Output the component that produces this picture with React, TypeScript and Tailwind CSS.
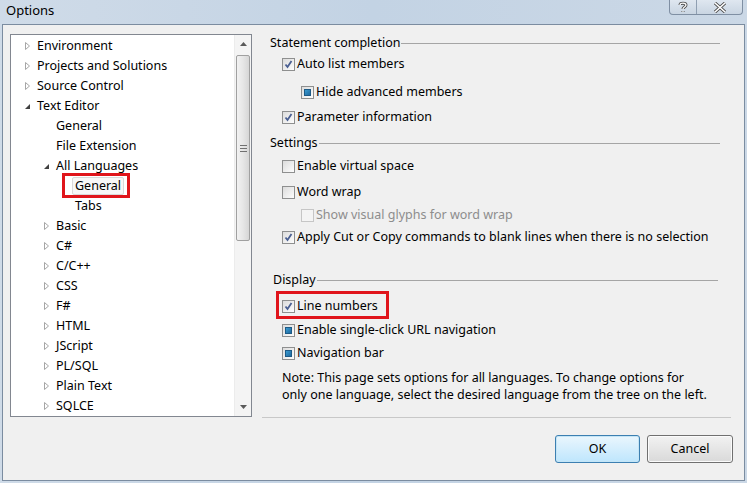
import React from 'react';

type CheckState = 'checked' | 'unchecked' | 'mixed' | 'disabled';

interface TreeItem {
  label: string;
  level: number;
  arrow?: 'closed' | 'open';
  selected?: boolean;
}

const TREE: TreeItem[] = [
  { label: 'Environment', level: 0, arrow: 'closed' },
  { label: 'Projects and Solutions', level: 0, arrow: 'closed' },
  { label: 'Source Control', level: 0, arrow: 'closed' },
  { label: 'Text Editor', level: 0, arrow: 'open' },
  { label: 'General', level: 1 },
  { label: 'File Extension', level: 1 },
  { label: 'All Languages', level: 1, arrow: 'open' },
  { label: 'General', level: 2, selected: true },
  { label: 'Tabs', level: 2 },
  { label: 'Basic', level: 1, arrow: 'closed' },
  { label: 'C#', level: 1, arrow: 'closed' },
  { label: 'C/C++', level: 1, arrow: 'closed' },
  { label: 'CSS', level: 1, arrow: 'closed' },
  { label: 'F#', level: 1, arrow: 'closed' },
  { label: 'HTML', level: 1, arrow: 'closed' },
  { label: 'JScript', level: 1, arrow: 'closed' },
  { label: 'PL/SQL', level: 1, arrow: 'closed' },
  { label: 'Plain Text', level: 1, arrow: 'closed' },
  { label: 'SQLCE', level: 1, arrow: 'closed' },
];

const INDENT = ['pl-[13px]', 'pl-[32px]', 'pl-[51px]'];

function Arrow({ kind }: { kind?: 'closed' | 'open' }) {
  if (!kind) return <span className="w-[13px] shrink-0" />;
  if (kind === 'open') {
    return (
      <svg width="13" height="10" viewBox="0 0 13 10" className="shrink-0">
        <path d="M1 8 L6 3 L6 8 Z" fill="#404040" />
      </svg>
    );
  }
  return (
    <svg width="13" height="10" viewBox="0 0 13 10" className="shrink-0">
      <path d="M1.5 1.5 L5.5 5 L1.5 8.5 Z" fill="none" stroke="#a6a6a6" strokeWidth="1" />
    </svg>
  );
}

function Checkbox({ state }: { state: CheckState }) {
  if (state === 'disabled') {
    return <span className="h-[13px] w-[13px] shrink-0 border border-[#c6c6c6] bg-[#f4f4f4]" />;
  }
  return (
    <span className="flex h-[13px] w-[13px] shrink-0 items-center justify-center border border-[#8e8f8f] bg-gradient-to-br from-[#dcdcdc] to-[#fdfdfd]">
      {state === 'checked' && (
        <svg width="9" height="9" viewBox="0 0 9 9">
          <path d="M1.5 4.5 L3.5 7 L7.5 1" fill="none" stroke="#4a5f92" strokeWidth="1.8" />
        </svg>
      )}
      {state === 'mixed' && (
        <span className="h-[7px] w-[7px] border border-[#1d5a86] bg-gradient-to-br from-[#3a9bd0] to-[#1f6aa0]" />
      )}
    </span>
  );
}

function Option({
  label,
  state,
  indent = false,
  className = '',
}: {
  label: string;
  state: CheckState;
  indent?: boolean;
  className?: string;
}) {
  return (
    <div className={`flex h-[20px] items-center gap-[2px] ${indent ? 'pl-[39px]' : 'pl-[20px]'} ${className}`}>
      <Checkbox state={state} />
      <span className={`whitespace-nowrap ${state === 'disabled' ? 'text-[#8d8d8d]' : 'text-black'}`}>{label}</span>
    </div>
  );
}

function Heading({ label, className = '' }: { label: string; className?: string }) {
  return (
    <div className={`flex h-[20px] items-center ${className}`}>
      <span className="pr-[1px]">{label}</span>
      <span className="h-px flex-1 bg-[#a5a5a5]" />
    </div>
  );
}

function Scrollbar() {
  return (
    <div className="flex w-[17px] shrink-0 flex-col border-l border-[#ececec] bg-[#f4f4f4]">
      <div className="flex h-[18px] items-center justify-center">
        <svg width="7" height="4" viewBox="0 0 7 4">
          <path d="M0 4 L3.5 0 L7 4 Z" fill="#5a5a5a" />
        </svg>
      </div>
      <div className="mx-[1px] mt-[2px] flex h-[186px] items-center justify-center rounded-[2px] border border-[#a0a0a0] bg-gradient-to-r from-[#f2f2f2] via-[#e6e6e6] to-[#d6d6d6]">
        <div className="flex flex-col gap-[2px]">
          <span className="h-px w-[7px] bg-[#707070]" />
          <span className="h-px w-[7px] bg-[#707070]" />
          <span className="h-px w-[7px] bg-[#707070]" />
        </div>
      </div>
      <div className="flex-1" />
      <div className="flex h-[18px] items-center justify-center">
        <svg width="7" height="4" viewBox="0 0 7 4">
          <path d="M0 0 L3.5 4 L7 0 Z" fill="#5a5a5a" />
        </svg>
      </div>
    </div>
  );
}

export default function App() {
  return (
    <div
      className="flex h-[483px] w-[747px] flex-col overflow-hidden bg-gradient-to-r from-[#cfdbe8] via-[#c3d3e4] to-[#cbd8e6] text-[12.5px] text-black"
      style={{ fontFamily: '"Noto Sans", "Open Sans", sans-serif' }}
    >
      {/* title bar */}
      <div className="relative flex h-[24px] shrink-0 items-start">
        <span className="pl-[6px] pt-[1px] text-[13px] text-black">Options</span>
        <div className="absolute right-[4px] top-0 flex h-[15px] overflow-hidden rounded-b-[4px] border border-t-0 border-[#7f8fa3] bg-gradient-to-b from-[#dfe7f0] to-[#c9d5e2]">
          <div className="flex w-[27px] items-center justify-center border-r border-[#8f9fb2]">
            <svg width="10" height="12" viewBox="0 0 10 12">
              <path
                d="M2 4 C2 1.5 8 1.5 8 4 C8 6 5 6 5 8 M5 10 L5 11"
                fill="none"
                stroke="#4d4d4d"
                strokeWidth="3"
              />
              <path
                d="M2 4 C2 1.5 8 1.5 8 4 C8 6 5 6 5 8 M5 10 L5 11"
                fill="none"
                stroke="#ffffff"
                strokeWidth="1.3"
              />
            </svg>
          </div>
          <div className="flex w-[45px] items-center justify-center">
            <svg width="14" height="11" viewBox="0 0 14 11">
              <path d="M2 1 L12 10 M12 1 L2 10" stroke="#4d4d4d" strokeWidth="3.2" />
              <path d="M2 1 L12 10 M12 1 L2 10" stroke="#ffffff" strokeWidth="1.6" />
            </svg>
          </div>
        </div>
      </div>

      {/* client area */}
      <div className="relative mx-[2px] mb-[2px] flex flex-1 flex-col border border-[#7b8ca0] bg-[#f0f0f0]">
        <div className="flex items-start">
          {/* tree */}
          <div className="ml-[7px] mt-[9px] flex h-[383px] w-[242px] shrink-0 border border-[#828790] bg-white">
            <div className="flex-1 overflow-hidden pt-[1px]">
              {TREE.map((item, i) => (
                <div key={i} className={`flex h-[20px] items-center ${INDENT[item.level]}`}>
                  <Arrow kind={item.arrow} />
                  <span
                    className={
                      item.selected
                        ? '-ml-[3px] rounded-[2px] border border-[#d9d9d9] bg-[#f7f7f7] px-[2px] leading-[16px]'
                        : ''
                    }
                  >
                    {item.label}
                  </span>
                </div>
              ))}
            </div>
            <Scrollbar />
          </div>

          {/* options pane */}
          <div className="ml-[10px] mt-[8px] flex w-[458px] flex-col">
            <Heading label="Statement completion" className="pl-[8px]" />
            <Option label="Auto list members" state="checked" className="mt-[1px]" />
            <Option label="Hide advanced members" state="mixed" indent className="mt-[8px]" />
            <Option label="Parameter information" state="checked" className="mt-[5px]" />

            <Heading label="Settings" className="mt-[6px] pl-[8px]" />
            <Option label="Enable virtual space" state="unchecked" className="mt-[3px]" />
            <Option label="Word wrap" state="unchecked" className="mt-[6px]" />
            <Option label="Show visual glyphs for word wrap" state="disabled" indent className="mt-[3px]" />
            <Option
              label="Apply Cut or Copy commands to blank lines when there is no selection"
              state="checked"
              className="mt-[2px]"
            />

            <Heading label="Display" className="mt-[23px] pl-[11px] pr-[2px]" />
            <Option label="Line numbers" state="checked" className="mt-[6px]" />
            <Option label="Enable single-click URL navigation" state="mixed" className="mt-[4px]" />
            <Option label="Navigation bar" state="mixed" className="mt-[3px]" />
            <p className="mt-[6px] whitespace-nowrap pl-[20px] leading-[17px]">
              Note: This page sets options for all languages. To change options for
              <br />
              only one language, select the desired language from the tree on the left.
            </p>
          </div>
        </div>

        {/* separator + buttons */}
        <div className="ml-[259px] mr-[13px] mt-auto h-px bg-[#c8c8c8]" />
        <div className="mb-[17px] mt-[17px] flex justify-end gap-[7px] pr-[11px]">
          <button
            type="button"
            className="h-[28px] w-[85px] rounded-[3px] border border-[#3c7fb1] bg-gradient-to-b from-[#eaf6fd] to-[#bee6fd] text-[12.5px] shadow-[inset_0_0_0_1px_#c4e5f6]"
          >
            OK
          </button>
          <button
            type="button"
            className="h-[28px] w-[86px] rounded-[3px] border border-[#707070] bg-gradient-to-b from-[#f2f2f2] to-[#d9d9d9] text-[12.5px] shadow-[inset_0_0_0_1px_#fbfbfb]"
          >
            Cancel
          </button>
        </div>

        {/* red annotation boxes */}
        <div className="pointer-events-none absolute left-[59px] top-[148px] h-[25px] w-[68px] border-[3px] border-[#e0151b]" />
        <div className="pointer-events-none absolute left-[273px] top-[266px] h-[28px] w-[113px] border-[3px] border-[#e0151b]" />
      </div>
    </div>
  );
}
